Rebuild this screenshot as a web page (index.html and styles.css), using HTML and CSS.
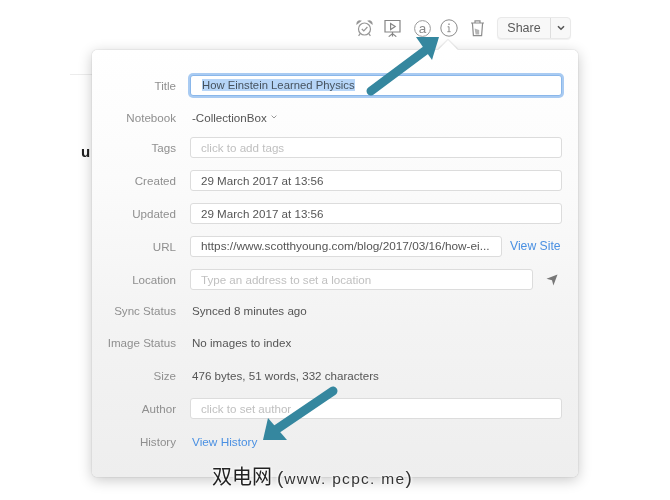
FILE: index.html
```
<!DOCTYPE html>
<html lang="en">
<head>
<meta charset="utf-8">
<title>Note info</title>
<link rel="stylesheet" href="styles.css">
</head>
<body>
<div class="page">
  <div class="behind-line"></div>
  <div class="behind-text">u</div>
  <header class="toolbar">
    <svg class="tool tool-alarm" width="17" height="18" viewBox="0 0 17 18" fill="none" stroke="#969696" stroke-width="1.2"><circle cx="8.5" cy="10" r="6"/><path d="M5.8 10l2 2 3.6-4"/><path d="M1 4.8C1 2.8 2.6 1.4 4.6 2L1 4.8zM16 4.8C16 2.8 14.4 1.4 12.4 2L16 4.8z"/><path d="M4.2 14.6l-1.6 2.2M12.8 14.6l1.6 2.2"/></svg>
    <svg class="tool tool-present" width="17" height="18" viewBox="0 0 17 18" fill="none" stroke="#858585" stroke-width="1.2"><path d="M1 1.5h15v11.5H1z"/><path d="M6.6 4.6l4.6 3-4.6 3z"/><path d="M8.5 13v2M8.5 14.6l-3.8 3M8.5 14.6l3.8 3M8.5 15v2.6"/></svg>
    <svg class="tool tool-at" width="17" height="17" viewBox="0 0 17 17" fill="none" stroke="#9a9a9a" stroke-width="1"><circle cx="8.5" cy="8.5" r="7.9"/><text x="8.5" y="12.6" text-anchor="middle" class="at-glyph">a</text></svg>
    <svg class="tool tool-info" width="18" height="18" viewBox="0 0 18 18" fill="none" stroke="#8a8a8a" stroke-width="1"><circle cx="9" cy="9" r="8.2"/><path d="M9 7.6v5M7.6 7.8H9M7.4 12.7h3.2"/><path d="M9 4.6v1.3" stroke-width="1.3"/></svg>
    <svg class="tool tool-trash" width="15" height="18" viewBox="0 0 15 18" fill="none" stroke="#8c8c8c" stroke-width="1.2"><path d="M1 4h13M5 4V1.8h5V4M2.4 4l1 12.6h8.2l1-12.6"/><path d="M4.6 9.6l1 5.8h3.6V11z" fill="#b5b5b5" stroke="none"/></svg>
    <div class="share">
      <span class="share-label">Share</span>
      <span class="share-caret"><svg width="8" height="6" viewBox="0 0 8 6" fill="none" stroke="#555" stroke-width="1.6"><path d="M1 1.2l3 3 3-3"/></svg></span>
    </div>
  </header>

  <section class="popover">
    <span class="pointer"></span>
    <div class="form">
      <label class="key">Title</label>
      <div class="field field-focus"><span class="selected">How Einstein Learned Physics</span></div>

      <label class="key">Notebook</label>
      <div class="value notebook">-CollectionBox <svg width="6" height="4" viewBox="0 0 6 4" fill="none" stroke="#999"><path d="M.6.6L3 3 5.4.6"/></svg></div>

      <label class="key">Tags</label>
      <div class="field placeholder">click to add tags</div>

      <label class="key">Created</label>
      <div class="field">29 March 2017 at 13:56</div>

      <label class="key">Updated</label>
      <div class="field">29 March 2017 at 13:56</div>

      <label class="key">URL</label>
      <div class="with-action">
        <div class="field field-url">https://www.scotthyoung.com/blog/2017/03/16/how-ei...</div>
        <a class="link">View Site</a>
      </div>

      <label class="key">Location</label>
      <div class="with-action">
        <div class="field field-location placeholder">Type an address to set a location</div>
        <svg class="locate" width="12" height="12" viewBox="0 0 12 12"><path d="M.5 4.8L11.5.5 7.4 11.5 6 6.2z" fill="#777"/></svg>
      </div>

      <label class="key">Sync Status</label>
      <div class="value">Synced 8 minutes ago</div>

      <label class="key">Image Status</label>
      <div class="value">No images to index</div>

      <label class="key">Size</label>
      <div class="value">476 bytes, 51 words, 332 characters</div>

      <label class="key">Author</label>
      <div class="field placeholder">click to set author</div>

      <label class="key">History</label>
      <div class="value"><a class="link">View History</a></div>
    </div>
  </section>

  <svg class="arrows" width="670" height="500" viewBox="0 0 670 500">
    <path d="M371 91L426 50" stroke="#35879f" stroke-width="9" stroke-linecap="round" fill="none"/>
    <path d="M416 37L439 37 432 60z" fill="#35879f"/>
    <path d="M333 391L274 431" stroke="#35879f" stroke-width="9" stroke-linecap="round" fill="none"/>
    <path d="M268 418L263 440 287 440z" fill="#35879f"/>
  </svg>

  <div class="watermark"><span class="wm-cjk">双电网</span><span class="wm-latin"><span class="wm-paren">(</span>www. pcpc. me<span class="wm-paren">)</span></span></div>
</div>
</body>
</html>
```
FILE: styles.css
```
* { box-sizing: border-box; }
html, body { margin: 0; padding: 0; background: #fff; }
body { font-family: "Liberation Sans", Arial, sans-serif; }

.page {
  position: relative;
  width: 670px;
  height: 500px;
  overflow: hidden;
  background: #fff;
  filter: blur(0.4px);
}

.behind-line {
  position: absolute;
  left: 70px;
  top: 74px;
  width: 30px;
  height: 1px;
  background: #ececec;
}
.behind-text {
  position: absolute;
  left: 81px;
  top: 143px;
  font-size: 15px;
  line-height: 18px;
  font-weight: 700;
  color: #222;
}

.toolbar {
  display: flex;
  align-items: center;
  height: 56px;
  padding: 0 0 0 356px;
}
.tool { flex: none; }
.tool-present { margin-left: 11px; }
.tool-at { margin-left: 13px; }
.tool-info { margin-left: 9px; }
.tool-trash { margin-left: 12px; }
.at-glyph { font: 13.5px "Liberation Sans", sans-serif; fill: #8a8a8a; stroke: none; }

.share {
  display: flex;
  align-items: stretch;
  width: 74px;
  height: 22px;
  margin-left: 12px;
  background: #f8f8f8;
  border: 1px solid #e9e9e9;
  border-radius: 4px;
  box-shadow: 0 1px 1px rgba(0,0,0,.06);
}
.share-label {
  width: 53px;
  text-align: center;
  font-size: 12.5px;
  line-height: 20px;
  color: #5a5a5a;
  border-right: 1px solid #dedede;
}
.share-caret {
  flex: 1;
  display: flex;
  align-items: center;
  justify-content: center;
}

.popover {
  position: absolute;
  left: 92px;
  top: 50px;
  width: 486px;
  height: 427px;
  border-radius: 5px;
  background: linear-gradient(180deg, #fff 0%, #fbfbfb 30%, #f3f3f3 65%, #eeeeee 100%);
  box-shadow: 0 0 1px rgba(0,0,0,.35), 0 3px 14px rgba(0,0,0,.22);
}
.pointer {
  position: absolute;
  left: 349px;
  top: -7px;
  width: 14px;
  height: 14px;
  background: #fff;
  transform: rotate(45deg);
  box-shadow: -1px -1px 1px rgba(0,0,0,.1);
}

.form {
  position: relative;
  display: grid;
  grid-template-columns: 84px 372px;
  grid-template-rows: 32px 32px 28px 38px 28px 38px 29px 33px 31px 35px 31px 35px;
  column-gap: 14px;
  align-items: center;
  padding: 19px 0 0 0;
  font-size: 11.6px;
  color: #555;
}

.key {
  text-align: right;
  color: #8f8f8f;
  font-size: 11.6px;
}

.field {
  height: 21px;
  line-height: 19px;
  padding: 0 10px;
  background: #fff;
  border: 1px solid #dcdcdc;
  border-radius: 3px;
  white-space: nowrap;
  overflow: hidden;
}
.field-focus {
  height: 21px;
  font-size: 11.3px;
  padding-left: 11px;
  border: 1px solid #8ab7ea;
  box-shadow: 0 0 0 2px #a9cbf2;
}
.selected { background: #b6d5f8; color: #46525e; }
.placeholder { color: #c0c0c0; }
.value { padding-left: 2px; }
.notebook { display: flex; align-items: center; gap: 4px; }

.with-action { display: flex; align-items: center; }
.field-url { width: 312px; font-size: 11.8px; }
.field-location { width: 343px; font-size: 11.6px; }
.link { color: #4a90e2; font-size: 11.8px; }
.with-action .link { margin-left: 8px; font-size: 12.2px; }
.locate { margin-left: 13px; }

.arrows {
  position: absolute;
  left: 0;
  top: 0;
  pointer-events: none;
}

.watermark {
  position: absolute;
  left: 212px;
  top: 462px;
  display: flex;
  align-items: baseline;
  line-height: 27px;
  color: #222;
  white-space: nowrap;
  text-shadow: 0 0 2px #fff, 0 0 3px #fff, 0 0 4px #fff;
}
.wm-cjk {
  font-family: "Noto Sans CJK SC", sans-serif;
  font-size: 20px;
}
.wm-latin {
  margin-left: 5px;
  font-family: "Liberation Sans", sans-serif;
  font-size: 15.5px;
  letter-spacing: 1.3px;
  color: #333;
}
.wm-paren { font-size: 19px; letter-spacing: 1px; }
```
